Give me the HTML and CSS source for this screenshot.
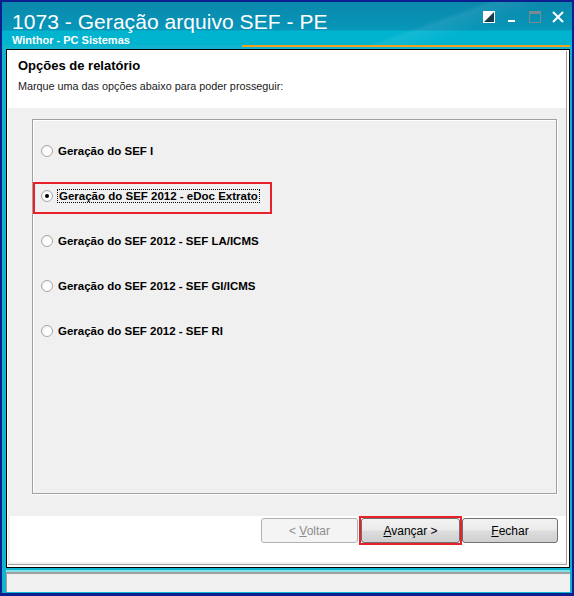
FILE: index.html
```html
<!DOCTYPE html>
<html lang="pt">
<head>
<meta charset="utf-8">
<title>1073 - Geração arquivo SEF - PE</title>
<link rel="stylesheet" href="styles.css">
</head>
<body>
<div class="window">
  <div class="titlebar">
    <div class="titles">
      <div class="title">1073 - Geração arquivo SEF - PE</div>
      <div class="subtitle">Winthor - PC Sistemas</div>
    </div>
    <div class="controls">
      <svg class="ctl" width="12" height="12" viewBox="0 0 12 12"><rect x="0.5" y="0.5" width="11" height="11" fill="#1a3a4a" stroke="#fff"/><polygon points="1,1 11,1 1,11" fill="#fff"/></svg>
      <svg class="ctl" width="12" height="12" viewBox="0 0 12 12"><rect x="2" y="9" width="7" height="2" fill="#fff"/></svg>
      <svg class="ctl" width="12" height="12" viewBox="0 0 12 12"><rect x="0.5" y="0.5" width="11" height="11" fill="none" stroke="#7a8a90"/><rect x="0" y="0" width="12" height="3" fill="#7a8a90"/></svg>
      <svg class="ctl" width="12" height="12" viewBox="0 0 12 12"><path d="M1 1 L11 11 M11 1 L1 11" stroke="#fff" stroke-width="2"/></svg>
    </div>
  </div>
  <div class="accent"></div>
  <div class="frame">
    <div class="panel">
      <div class="header">
        <div class="h-title">Opções de relatório</div>
        <div class="h-sub">Marque uma das opções abaixo para poder prosseguir:</div>
      </div>
      <div class="body">
        <div class="group">
          <label class="opt"><span class="radio"></span><span>Geração do SEF I</span></label>
          <label class="opt selected"><span class="radio checked"></span><span class="focus">Geração do SEF 2012 - eDoc Extrato</span></label>
          <label class="opt"><span class="radio"></span><span>Geração do SEF 2012 - SEF LA/ICMS</span></label>
          <label class="opt"><span class="radio"></span><span>Geração do SEF 2012 - SEF GI/ICMS</span></label>
          <label class="opt"><span class="radio"></span><span>Geração do SEF 2012 - SEF RI</span></label>
        </div>
      </div>
      <div class="footer">
        <button class="btn disabled">&lt; <u>V</u>oltar</button>
        <div class="hl"><button class="btn"><u>A</u>vançar &gt;</button></div>
        <button class="btn"><u>F</u>echar</button>
      </div>
    </div>
  </div>
  <div class="status"></div>
</div>
</body>
</html>
```
FILE: styles.css
```css
* { box-sizing: border-box; }
html, body { margin: 0; padding: 0; background: #0d1f8f; }
.window {
  width: 574px; height: 596px;
  border: 2px solid #0d1f8f;
  border-bottom-width: 3px;
  background: #10b4cc;
  display: flex; flex-direction: column;
  font-family: "Liberation Sans", Arial, sans-serif;
}
.titlebar {
  height: 43px;
  display: flex; justify-content: space-between;
  background:
    linear-gradient(160deg, rgba(255,255,255,0) 70%, rgba(255,255,255,0.08) 72%, rgba(255,255,255,0) 80%),
    linear-gradient(180deg, #0a88ac 0px, #0796b9 28px, #00b3cf 29px, #00b4d0 43px);
  color: #fff;
  padding: 0 0 0 10px;
}
.titles { padding-top: 8px; }
.title { font-size: 21px; line-height: 24px; letter-spacing: 0.05px; }
.subtitle { font-weight: bold; font-size: 11px; line-height: 12px; margin-top: 0px; padding-left: 0px; }
.controls { display: flex; gap: 11px; padding: 9px 8px 0 0; }
.ctl { display: block; }
.accent {
  height: 2px; margin-left: 240px; margin-right: 2px;
  background: #f0a020;
}
.frame {
  margin: 2px 2px 0 4px;
  height: 519px;
  border: 1px solid #000;
  background: #fff;
  padding: 1px 2px 2px 1px;
}
.panel {
  height: 100%;
  border-right: 1px solid #a0a0a0;
  border-bottom: 1px solid #a0a0a0;
  background: #f0f0f0;
  display: flex; flex-direction: column;
}
.header {
  background: #fff;
  height: 57px;
  padding: 7px 0 0 10px;
  color: #000;
}
.h-title { font-weight: bold; font-size: 13px; line-height: 16px; }
.h-sub { font-size: 10.8px; line-height: 13px; margin-top: 6px; color: #1a1a1a; }
.body {
  height: 408px;
  padding: 11px 9px 22px 24px;
}
.group {
  height: 100%;
  border: 1px solid #a0a0a0;
  box-shadow: inset 1px 1px 0 #fff, 1px 1px 0 #fff;
  padding-top: 23px;
  display: flex; flex-direction: column; gap: 29px;
}
.opt {
  display: flex; align-items: center;
  height: 16px;
  padding-left: 8px;
  font-weight: bold; font-size: 11.5px;
  color: #000;
  position: relative;
}
.radio {
  width: 12px; height: 12px; border-radius: 50%;
  border: 1px solid #a8a8a8;
  background: radial-gradient(circle at 60% 60%, #fff 40%, #e4e4e4 100%);
  margin-right: 5px;
  position: relative;
  flex: none;
}
.radio.checked::after {
  content: ""; position: absolute; left: 3px; top: 3px;
  width: 4px; height: 4px; border-radius: 50%; background: #000;
}
.focus { outline: 1px dotted #000; outline-offset: 0px; padding: 0 1px; }
.selected::before {
  content: ""; position: absolute;
  left: 0; top: -6px; width: 235px; height: 28px;
  border: 2px solid #e8202a;
}
.footer {
  flex: 1;
  background: #fff;
  margin-left: 2px;
  margin-bottom: 2px;
  display: flex; justify-content: flex-end; align-items: flex-start;
  padding: 2px 8px 0 0;
}
.btn {
  font-family: "Liberation Sans", Arial, sans-serif;
  font-size: 12px;
  height: 25px;
  border: 1px solid #707070;
  border-radius: 3px;
  background: linear-gradient(#f2f2f2 0%, #ebebeb 48%, #dddddd 52%, #cfcfcf 100%);
  color: #000;
  padding: 0;
}
.btn u { text-decoration: underline; }
.btn.disabled {
  width: 97px; margin-right: 1px;
  border-color: #adb2b5;
  background: #f4f4f4;
  color: #8d8d8d;
}
.hl {
  border: 2px solid #e8202a;
  margin-top: -2px;
  width: 103px; height: 29px;
  padding: 0;
}
.hl .btn { width: 99px; height: 25px; display: block; }
.footer > .btn:last-child { width: 96px; }
.status {
  margin: 2px 2px 0 4px;
  border-top: 2px solid #80e0ea;
  height: 22px;
  background: #f0f0f0;
  box-shadow: inset 1px 1px 0 #a0a0a0, inset 0 2px 0 #a0a0a0;
}
```
